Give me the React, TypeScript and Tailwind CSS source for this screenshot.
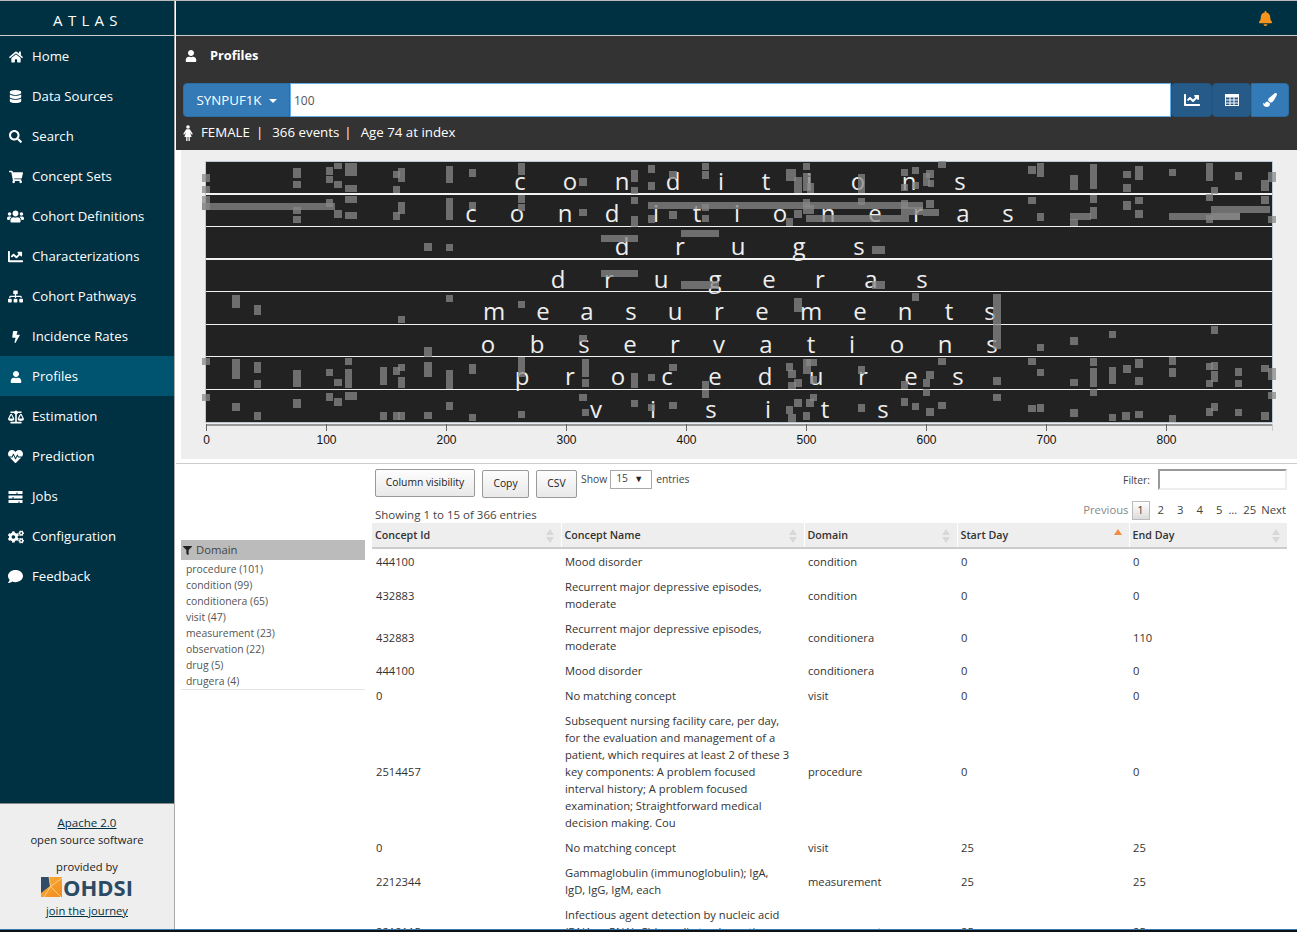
import React from 'react';
import {
  FaBalanceScale,
  FaBell,
  FaBolt,
  FaChartLine,
  FaCogs,
  FaComment,
  FaDatabase,
  FaFilter,
  FaHeartbeat,
  FaHome,
  FaPaintBrush,
  FaSearch,
  FaShoppingCart,
  FaSitemap,
  FaUser,
  FaUsers,
} from 'react-icons/fa';

const font = { fontFamily: '"Open Sans", sans-serif' };

const JobsIcon = () => (
  <svg width="15" height="12" viewBox="0 0 14 12" fill="currentColor">
    <path d="M0 0h14v3H9V1.500H8V3H0zM0 4.500h14v3h-9V6H4v1.500H0zM0 9h14v3h-3v-1.500h-1V12H0z" />
  </svg>
);

const GridIcon = () => (
  <svg width="14" height="12" viewBox="0 0 14 12">
    <path fillRule="evenodd" fill="currentColor" d="M0 0h14v12H0zM1 3.500v2h3.500v-2zM5.500 3.500v2h3v-2zM9.500 3.500v2H13v-2zM1 6.500v2h3.500v-2zM5.500 6.500v2h3v-2zM9.500 6.500v2H13v-2zM1 9.500V11h3.500V9.500zM5.500 9.500V11h3V9.500zM9.500 9.500V11H13V9.500z" />
  </svg>
);

const DressIcon = () => (
  <svg width="10" height="16" viewBox="0 0 10 16" fill="currentColor">
    <circle cx="5" cy="2" r="1.800" />
    <path d="M3.200 4.300h3.600L9.800 9l-1 .7L7 7.200 8.600 12H6.800v4H5.500v-4h-1v4H3.200v-4H1.400L3 7.200 1.200 9.700.2 9z" />
  </svg>
);

const navItems = [
  { label: 'Home', icon: <FaHome size={14} /> },
  { label: 'Data Sources', icon: <FaDatabase size={13} /> },
  { label: 'Search', icon: <FaSearch size={13} /> },
  { label: 'Concept Sets', icon: <FaShoppingCart size={14} /> },
  { label: 'Cohort Definitions', icon: <FaUsers size={17} /> },
  { label: 'Characterizations', icon: <FaChartLine size={15} /> },
  { label: 'Cohort Pathways', icon: <FaSitemap size={15} /> },
  { label: 'Incidence Rates', icon: <FaBolt size={12} /> },
  { label: 'Profiles', icon: <FaUser size={12} />, active: true },
  { label: 'Estimation', icon: <FaBalanceScale size={16} /> },
  { label: 'Prediction', icon: <FaHeartbeat size={15} /> },
  { label: 'Jobs', icon: <JobsIcon /> },
  { label: 'Configuration', icon: <FaCogs size={16} /> },
  { label: 'Feedback', icon: <FaComment size={15} /> },
];

const bands: [string, number, number[]][] = [
  ['conditions', 190, [520, 570, 622, 673, 721, 766, 809, 858, 909, 960]],
  ['conditioneras', 222, [471, 517, 565, 612, 656, 697, 737, 780, 828, 875, 918, 963, 1008]],
  ['drugs', 255, [622, 680, 738, 799, 859]],
  ['drugeras', 288, [558, 609, 661, 715, 769, 820, 871, 922]],
  ['measurements', 320, [494, 543, 587, 631, 675, 719, 762, 811, 860, 905, 949, 990]],
  ['observations', 353, [488, 537, 584, 630, 675, 719, 766, 811, 852, 897, 945, 992]],
  ['procedures', 385, [522, 570, 618, 667, 715, 765, 816, 863, 911, 958]],
  ['visits', 418, [596, 653, 711, 768, 825, 883]],
];

// x, y, w, h of each event on the page
const events: number[][] = [
  [202,174,8,8],[202,186,8,7],[293,168,8,10],[293,181,8,7],[326,167,7,8],[326,176,7,7],[334,163,8,6],[334,181,8,7],
  [345,163,12,13],[345,185,12,7],[393,171,7,7],[398,168,7,14],[393,186,7,7],[446,166,7,17],[469,169,7,8],[518,163,7,12],
  [579,178,8,8],[631,170,7,12],[631,187,7,7],[648,165,7,8],[648,182,7,8],[669,171,8,8],[702,163,7,7],[702,171,7,8],
  [786,169,10,12],[794,177,8,16],[803,163,7,7],[803,173,8,18],[807,183,7,10],[858,174,7,19],[901,169,7,7],[901,184,7,7],
  [912,167,7,7],[912,182,7,7],[923,173,7,13],[926,170,8,8],[928,180,6,7],[938,161,8,7],
  [1028,166,8,8],[1037,163,7,14],[1070,175,8,15],[1090,164,7,25],[1123,171,8,7],[1123,184,8,8],[1135,166,8,14],
  [1169,169,7,7],[1206,163,7,18],[1211,187,7,7],[1235,172,7,8],[1261,180,8,11],[1268,172,8,10],

  [202,196,8,14],[202,203,133,7],[293,207,8,7],[293,216,8,7],[326,199,7,8],[334,210,8,8],[345,196,12,7],[345,212,12,7],
  [398,202,7,12],[393,212,7,8],[446,198,7,22],[469,202,7,7],[518,195,7,8],[518,204,7,7],
  [579,209,8,7],[631,197,7,7],[631,216,7,11],[648,202,275,7],[648,215,7,8],[669,211,8,8],[702,204,7,7],[702,215,7,7],
  [794,210,8,8],[786,218,7,8],[803,199,7,8],[803,205,11,9],[806,215,103,7],[858,198,7,7],[901,200,7,8],[901,207,22,8],
  [923,209,16,7],[926,200,8,8],
  [1028,197,8,7],[1037,213,7,8],[1070,213,21,7],[1070,219,8,7],[1090,195,7,8],[1090,207,7,12],[1123,201,8,9],[1135,197,8,7],
  [1135,210,8,8],[1169,213,71,7],[1206,194,7,7],[1211,206,59,7],[1211,213,29,7],[1206,215,7,8],[1261,196,8,8],[1268,216,8,7],

  [424,243,8,8],[446,244,7,7],[601,235,37,7],[681,230,38,7],[872,246,13,8],
  [601,270,37,7],[681,281,38,8],[872,281,13,8],

  [232,295,8,13],[254,305,7,10],[446,295,7,7],[398,316,7,7],[518,301,7,7],[794,298,8,14],[912,293,7,8],[993,294,8,55],
  [424,347,8,10],[579,335,8,7],[1037,344,7,7],[1070,337,8,8],[1109,331,7,7],[1211,326,7,8],

  [202,358,8,7],[232,359,8,20],[254,362,7,11],[254,380,7,8],[293,370,8,17],[326,369,7,7],[334,379,8,7],[345,358,7,7],
  [345,369,7,19],[380,367,7,18],[393,367,7,8],[398,364,7,7],[398,377,7,11],[424,362,8,15],[446,370,7,19],[469,364,7,10],
  [518,357,7,20],[582,359,7,18],[582,379,7,8],[631,373,7,15],[648,374,7,7],[669,364,8,7],[702,381,7,8],[786,363,7,8],
  [788,370,8,8],[788,382,8,7],[794,379,8,8],[803,359,8,15],[806,359,11,7],[810,376,7,8],[858,366,7,8],[901,381,7,8],
  [923,379,7,8],[926,371,8,8],[938,358,8,7],
  [993,377,8,8],[1028,358,8,7],[1037,369,7,7],[1070,379,8,7],[1090,358,7,8],[1090,368,7,19],[1109,367,7,17],[1123,365,8,8],
  [1135,359,8,9],[1135,377,8,8],[1169,357,7,8],[1169,368,7,9],[1206,363,7,7],[1211,362,7,8],[1211,371,7,11],[1206,380,7,7],
  [1235,368,7,8],[1235,380,7,7],[1261,365,8,7],[1268,368,8,12],

  [202,394,8,7],[232,403,8,8],[254,412,7,8],[293,399,8,9],[326,393,7,8],[334,398,8,8],[345,392,12,8],[380,412,7,8],
  [393,412,7,8],[398,412,7,8],[424,412,8,7],[446,402,7,8],[469,414,7,7],[518,411,7,7],
  [579,394,8,7],[582,409,7,7],[631,400,7,7],[648,404,7,7],[669,402,8,7],[702,390,7,8],[786,406,7,8],[788,414,8,8],
  [794,399,8,8],[803,412,7,8],[806,399,8,8],[810,394,7,7],[858,404,7,8],[901,398,7,8],[912,403,7,7],[923,389,7,7],
  [926,408,8,8],[938,402,8,7],
  [993,394,8,7],[1028,405,8,7],[1037,404,7,8],[1070,409,8,8],[1090,389,7,7],[1109,414,7,7],[1122,412,8,8],[1135,411,8,7],
  [1169,415,7,7],[1206,408,7,8],[1211,403,7,8],[1235,409,7,7],[1261,412,8,8],[1268,392,8,7],
];

const ticks = [0, 100, 200, 300, 400, 500, 600, 700, 800];

const Chart = () => (
  <svg width="1116" height="309" viewBox="181 150 1116 309" className="block">
    <rect x="206" y="162" width="1066" height="260" fill="#222222" />
    <path d="M205.500 161.500H1272.500V422.500M205.500 161.500V422.500H1272.500" fill="none" stroke="#b9c9d8" />
    <rect x="206" y="193" width="1066" height="2" fill="#f2f2f2" />
    <rect x="206" y="226" width="1066" height="1" fill="#f2f2f2" />
    <rect x="206" y="258" width="1066" height="2" fill="#f2f2f2" />
    <rect x="206" y="291" width="1066" height="1" fill="#f2f2f2" />
    <rect x="206" y="324" width="1066" height="1" fill="#f2f2f2" />
    <rect x="206" y="356" width="1066" height="1" fill="#f2f2f2" />
    <rect x="206" y="389" width="1066" height="1" fill="#f2f2f2" />
    {bands.map(([name, y, xs]) => (
      <text
        key={name}
        x={xs.join(' ')}
        y={y}
        textAnchor="middle"
        fontSize="24"
        fill="#eeeeee"
        style={font}
      >
        {name}
      </text>
    ))}
    {events.map(([x, y, w, h], i) => (
      <rect key={i} x={x} y={y} width={w} height={h} fill="#888888" fillOpacity="0.75" />
    ))}
    <rect x="206" y="424" width="1067" height="2" fill="#999999" />
    <rect x="1272" y="424" width="1" height="7" fill="#cccccc" />
    {ticks.map((t) => {
      const x = 206.5 + t * 1.2;
      return (
        <g key={t}>
          <rect x={x - 0.5} y="424" width="1" height="7" fill="#666666" />
          <text x={x} y="444" textAnchor="middle" fontSize="12" fill="#111111" style={{ fontFamily: '"Liberation Sans", sans-serif' }}>
            {t}
          </text>
        </g>
      );
    })}
  </svg>
);

const OhdsiLogo = () => (
  <svg width="21" height="20" viewBox="0 0 21 20" className="shrink-0">
    <defs>
      <linearGradient id="ohdsiOrange" x1="0" y1="0" x2="1" y2="1">
        <stop offset="0" stopColor="#fbb03b" />
        <stop offset="1" stopColor="#f08a1d" />
      </linearGradient>
    </defs>
    <rect width="21" height="20" fill="url(#ohdsiOrange)" />
    <path d="M0 0L8 0L9 9L0 16Z" fill="#2f4b66" />
    <path d="M21 0L13 0L21 6Z" fill="#f7a12c" />
    <path d="M8 0L9.500 9.500L20 20M21 1L9.500 9.500L3 20" fill="none" stroke="#fde3b5" strokeWidth="0.7" />
  </svg>
);

const Sidebar = () => (
  <aside className="w-[175px] shrink-0 flex flex-col bg-[#003142] border-r border-[#aaaaaa]">
    <div className="h-[35px] shrink-0 flex items-center justify-center border-b border-[#cccccc] text-[15px] tracking-[5.300px] pl-[2px] pt-[4px] text-white">
      ATLAS
    </div>
    <nav className="flex-1">
      {navItems.map((item) => (
        <div
          key={item.label}
          className={`h-10 flex items-center text-[13.200px] text-white pt-px ${item.active ? 'bg-[#005470]' : ''}`}
        >
          <span className="w-8 flex justify-center pr-[1px]">{item.icon}</span>
          <span>{item.label}</span>
        </div>
      ))}
    </nav>
    <div className="h-[126px] shrink-0 bg-[#eeeeee] border-t border-[#888888] flex flex-col items-center text-[11.200px] leading-[17px] text-[#222222] pt-[10px]">
      <a className="underline text-[#003142] text-[11.500px]">Apache 2.0</a>
      <div>open source software</div>
      <div className="mt-[10px]">provided by</div>
      <div className="flex items-center gap-[1px] h-[22px] mt-px">
        <OhdsiLogo />
        <span className="text-[22px] font-bold text-[#2c4a63] leading-none">OHDSI</span>
      </div>
      <a className="underline text-[#003142] mt-[4px]">join the journey</a>
    </div>
  </aside>
);

const ProfilePanel = () => (
  <div className="h-[114px] shrink-0 bg-[#333333] text-white flex flex-col">
    <div className="h-10 flex items-center pl-[9px] text-[12.800px] font-bold">
      <FaUser size={12} />
      <span className="ml-[13px]">Profiles</span>
    </div>
    <div className="mt-[7px] ml-[7px] mr-2 h-[34px] flex">
      <button className="w-[107px] flex items-center justify-center gap-[7px] bg-[#337ab7] border border-[#2e6da4] rounded-l text-[13.300px] pt-px">
        SYNPUF1K
        <span className="border-x-[4px] border-x-transparent border-t-[4px] border-t-white" />
      </button>
      <div className="flex-1 bg-white border border-[#66afe9] flex items-center pl-[3px] pt-px text-[12px] text-[#555555]">100</div>
      <button className="w-[41px] flex items-center justify-center bg-[#265a88] border border-[#245580] rounded-[4px]">
        <FaChartLine size={16} />
      </button>
      <button className="w-[39px] flex items-center justify-center bg-[#265a88] border border-[#245580] rounded-[4px]">
        <GridIcon />
      </button>
      <button className="w-[38px] flex items-center justify-center bg-[#337ab7] border border-[#2e6da4] rounded-r">
        <FaPaintBrush size={14} />
      </button>
    </div>
    <div className="h-[32px] flex items-center text-[13.300px] ml-[7px] pb-[1px]">
      <DressIcon />
      <span className="ml-[8px]">FEMALE</span>
      <span className="ml-[6px]">|</span>
      <span className="ml-[9px]">366 events</span>
      <span className="ml-[5px]">|</span>
      <span className="ml-[9px]">Age 74 at index</span>
    </div>
  </div>
);

const facets = [
  'procedure (101)',
  'condition (99)',
  'conditionera (65)',
  'visit (47)',
  'measurement (23)',
  'observation (22)',
  'drug (5)',
  'drugera (4)',
];

const Facets = () => (
  <div className="w-[184px] shrink-0 mt-[76px] ml-[5px]">
    <div className="h-5 bg-[#bbbbbb] flex items-center pl-[2px] text-[11.300px] text-[#444444]">
      <FaFilter size={9} className="text-[#222222]" />
      <span className="ml-[4px]">Domain</span>
    </div>
    <div className="pl-[5px] pt-[1px] border-b border-[#e5e5e5]">
      {facets.map((f) => (
        <div key={f} className="h-4 leading-4 text-[10.400px] text-[#555555]">{f}</div>
      ))}
    </div>
  </div>
);

const rows: [string, string, string, string, string][] = [
  ['444100', 'Mood disorder', 'condition', '0', '0'],
  ['432883', 'Recurrent major depressive episodes, moderate', 'condition', '0', '0'],
  ['432883', 'Recurrent major depressive episodes, moderate', 'conditionera', '0', '110'],
  ['444100', 'Mood disorder', 'conditionera', '0', '0'],
  ['0', 'No matching concept', 'visit', '0', '0'],
  [
    '2514457',
    'Subsequent nursing facility care, per day, for the evaluation and management of a patient, which requires at least 2 of these 3 key components: A problem focused interval history; A problem focused examination; Straightforward medical decision making. Cou',
    'procedure',
    '0',
    '0',
  ],
  ['0', 'No matching concept', 'visit', '25', '25'],
  ['2212344', 'Gammaglobulin (immunoglobulin); IgA, IgD, IgG, IgM, each', 'measurement', '25', '25'],
  [
    '2212115',
    'Infectious agent detection by nucleic acid (DNA or RNA); Chlamydia trachomatis, direct probe technique',
    'measurement',
    '25',
    '25',
  ],
];

const SortArrows = () => (
  <span className="ml-auto flex flex-col gap-[2px] pr-[7px]">
    <span className="border-x-[4px] border-x-transparent border-b-[6px] border-b-[#d8d8d8]" />
    <span className="border-x-[4px] border-x-transparent border-t-[6px] border-t-[#d8d8d8]" />
  </span>
);

const headers = ['Concept Id', 'Concept Name', 'Domain', 'Start Day', 'End Day'];

const ProfileTable = () => (
  <table className="table-fixed border-collapse w-[915px] text-[11.200px] leading-[17px] text-[#333333]">
    <colgroup>
      <col className="w-[189px]" />
      <col className="w-[243px]" />
      <col className="w-[153px]" />
      <col className="w-[172px]" />
      <col className="w-[158px]" />
    </colgroup>
    <thead>
      <tr className="bg-[#eeeeee] border-b-2 border-[#cccccc]">
        {headers.map((h) => (
          <th key={h} className="h-[25px] p-0 text-left text-[10.700px] font-semibold border-r border-white last:border-r-0">
            <div className="flex items-center pl-[3px] pt-px">
              <span>{h}</span>
              {h === 'Start Day' ? (
                <span className="ml-auto mb-[8px] mr-[7px] border-x-[4px] border-x-transparent border-b-[6px] border-b-[#f58a42]" />
              ) : (
                <SortArrows />
              )}
            </div>
          </th>
        ))}
      </tr>
    </thead>
    <tbody>
      {rows.map((r, i) => (
        <tr key={i}>
          {r.map((c, j) => (
            <td key={j} className={`py-1 pl-1 align-middle ${j === 1 ? 'pr-[14px]' : 'pr-1'}`}>{c}</td>
          ))}
        </tr>
      ))}
    </tbody>
  </table>
);

const ToolButton = ({ width, children }: { width: string; children: React.ReactNode }) => (
  <button className={`${width} h-7 border border-[#999999] rounded-[2px] bg-gradient-to-b from-[#fdfdfd] to-[#e9e9e9] text-[10.300px] text-[#222222]`}>
    {children}
  </button>
);

const TableArea = () => (
  <div className="w-[915px] ml-[7px] mt-[5px]">
    <div className="flex h-7 pl-[3px]">
      <ToolButton width="w-[100px]">Column visibility</ToolButton>
      <div className="ml-[7px]"><ToolButton width="w-[47px]">Copy</ToolButton></div>
      <div className="ml-[7px]"><ToolButton width="w-[41px]">CSV</ToolButton></div>
      <div className="ml-[4px] h-[20px] flex items-center text-[10.300px] text-[#444444]">
        <span className="pt-[2px]">Show</span>
        <div className="ml-[3px] w-[42px] h-[19px] border border-[#aaaaaa] flex items-center justify-between pl-[5px] pr-[8px]">
          <span>15</span>
          <span className="text-[9px] text-[#222222]">▼</span>
        </div>
        <span className="ml-[4px] pt-[2px]">entries</span>
      </div>
      <div className="ml-auto h-[21px] flex items-center text-[10.300px] text-[#444444]">
        <span className="pt-[2px]">Filter:</span>
        <div className="ml-2 w-[129px] h-[21px] border-2 border-t-[#999999] border-l-[#999999] border-r-[#eeeeee] border-b-[#eeeeee]" />
      </div>
    </div>
    <div className="h-[26px] flex items-center justify-between pl-[3px] text-[11.500px] text-[#444444]">
      <span className="mt-[10px]">Showing 1 to 15 of 366 entries</span>
      <div className="flex items-center pr-px text-[11.300px]">
        <span className="text-[#888888]">Previous</span>
        <span className="ml-[3px] w-[18px] h-[19px] flex items-center justify-center border border-[#bbbbbb] bg-gradient-to-b from-white to-[#dcdcdc]">1</span>
        <span className="ml-[8px]">2</span>
        <span className="ml-[13px]">3</span>
        <span className="ml-[13px]">4</span>
        <span className="ml-[13px]">5</span>
        <span className="ml-[6px]">...</span>
        <span className="ml-[6px]">25</span>
        <span className="ml-[5px]">Next</span>
      </div>
    </div>
    <ProfileTable />
  </div>
);

export default function App() {
  return (
    <div className="w-[1297px] h-[932px] overflow-hidden flex flex-col bg-white" style={font}>
      <div className="h-px shrink-0 bg-[#bbbbbb]" />
      <div className="flex-1 min-h-0 flex">
        <Sidebar />
        <main className="flex-1 min-w-0 pl-px flex flex-col overflow-hidden">
          <div className="h-[35px] shrink-0 bg-[#003142] border-b border-[#cccccc] flex items-center justify-end pr-[24px]">
            <FaBell size={15} className="text-[#f7941d]" />
          </div>
          <ProfilePanel />
          <div className="shrink-0 ml-[5px] h-[309px] bg-[#eeeeee]">
            <Chart />
          </div>
          <div className="shrink-0 mt-[4px] h-px bg-[#cccccc]" />
          <div className="flex">
            <Facets />
            <TableArea />
          </div>
        </main>
      </div>
      <div className="h-[3px] shrink-0 bg-[#111111] border-t border-[#337ab7]" />
    </div>
  );
}
